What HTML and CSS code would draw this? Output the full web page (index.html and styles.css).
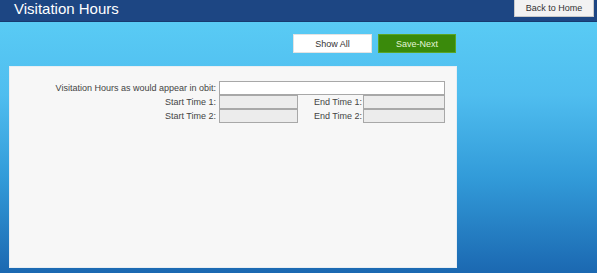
FILE: index.html
```html
<!DOCTYPE html>
<html>
<head>
  <meta name="viewport" content="width=device-width,initial-scale=1.0">
  <title>Visitation Hours</title>
  <link rel="stylesheet" href="styles.css">
</head>
<body>
  <div class="topbar">
    <h1>Visitation Hours</h1>
    <button class="home-btn">Back to Home</button>
  </div>

  <div class="content">
    <div class="actions">
      <button class="btn btn-light">Show All</button>
      <button class="btn btn-green">Save-Next</button>
    </div>

    <div class="panel">
      <div class="form-grid">
        <label class="lbl">Visitation Hours as would appear in obit:</label>
        <input class="field field-wide" type="text" autofocus>

        <label class="lbl">Start Time 1:</label>
        <input class="field field-off" type="text">
        <label class="lbl lbl-end">End Time 1:</label>
        <input class="field field-off" type="text">

        <label class="lbl">Start Time 2:</label>
        <input class="field field-off" type="text">
        <label class="lbl lbl-end">End Time 2:</label>
        <input class="field field-off" type="text">
      </div>
    </div>
  </div>
</body>
</html>
```

FILE: styles.css
```css
html, body { height: 100%; }
body {
  margin: 0;
  font-family: "Liberation Sans", Arial, sans-serif;
  background: linear-gradient(to bottom, #5ccff6 0%, #4fbdef 35%, #329bd9 65%, #1b68b1 100%);
  display: flex;
  flex-direction: column;
  overflow: hidden;
}

.topbar {
  height: 21px;
  background: #1d4683;
  border-bottom: 1px solid #173a70;
  display: flex;
  justify-content: space-between;
  align-items: flex-start;
  padding: 0 3px 0 14px;
}
.topbar h1 {
  margin: 0;
  color: #fff;
  font-size: 15px;
  font-weight: normal;
  line-height: 17px;
}
.home-btn {
  width: 80px;
  height: 18px;
  margin-top: -1px;
  background: #f2f2f2;
  border: 1px solid #c9c9c9;
  color: #333;
  font-family: inherit;
  font-size: 9px;
  padding: 0;
}

.content {
  flex: 1;
  padding: 12px 140px 5px 9px;
  display: flex;
  flex-direction: column;
}

.actions {
  display: flex;
  justify-content: flex-end;
  gap: 6px;
  padding-right: 1px;
}
.btn {
  width: 79px;
  height: 19px;
  padding: 0;
  font-family: inherit;
  font-size: 9px;
}
.btn-light {
  background: #fff;
  border: 1px solid #e3e3e3;
  color: #333;
}
.btn-green {
  width: 78px;
  background: #3a8a0b;
  border: 1px solid #5aa526;
  color: #e4f5d6;
}

.panel {
  flex: 1;
  margin-top: 13px;
  background: #f7f7f7;
  border: 1px solid #e8eef3;
  padding-top: 14px;
}

.form-grid {
  display: grid;
  grid-template-columns: 209px 79px 65px 82px;
  grid-auto-rows: 14px;
}
.lbl {
  font-size: 9px;
  color: #444;
  text-align: right;
  padding-right: 3px;
  line-height: 14px;
  white-space: nowrap;
}
.lbl-end { padding-right: 1px; }
.field {
  box-sizing: border-box;
  height: 14px;
  margin: 0;
  border: 1px solid #a8a8a8;
  background: #ececec;
  font-size: 9px;
  padding: 0 2px;
  width: 100%;
}
.field-wide {
  grid-column: 2 / 5;
  background: #fff;
  outline: none;
}
```
